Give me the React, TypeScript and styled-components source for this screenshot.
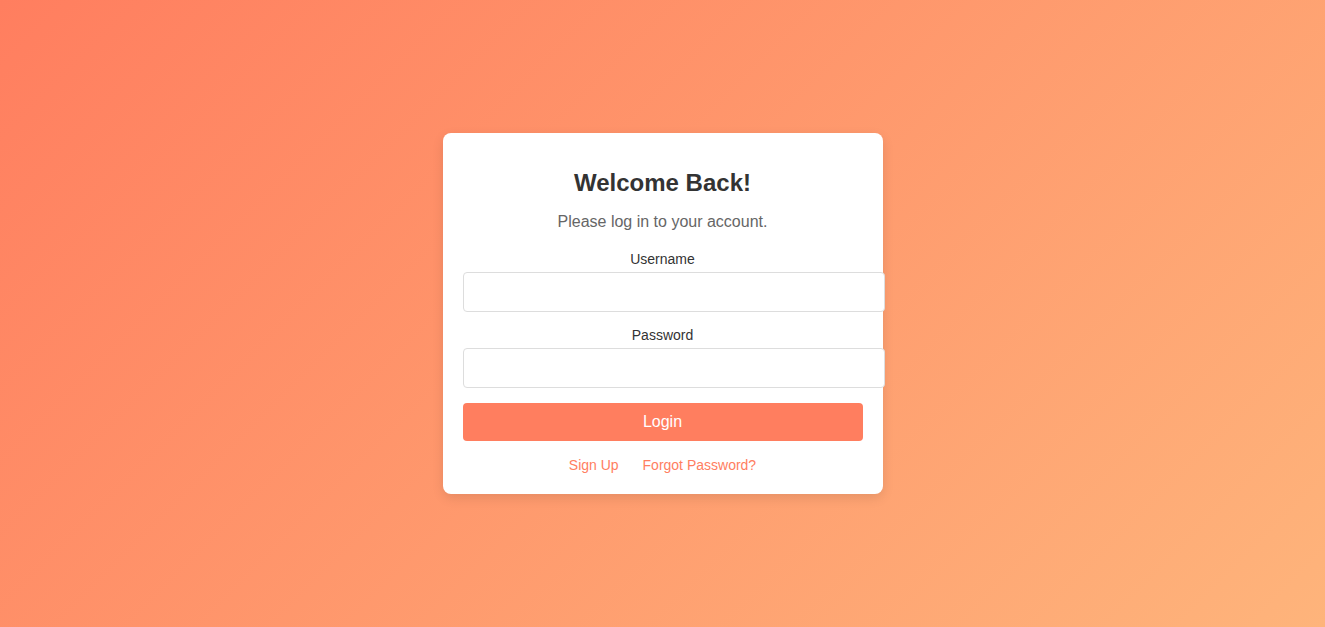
import styled, { createGlobalStyle } from "styled-components"

const GlobalStyle = createGlobalStyle`
  html, body {
    margin: 0;
    padding: 0;
  }

  body {
    font-family: "Liberation Sans", Arial, sans-serif;
  }
`

const Page = styled.main`
  min-height: 100vh;
  display: flex;
  align-items: center;
  justify-content: center;
  background: linear-gradient(135deg, #ff7e5f, #feb47b);
`

const Card = styled.div`
  width: 400px;
  padding: 20px 20px 21px;
  background: #fff;
  border-radius: 8px;
  box-shadow: 0 4px 12px rgba(0, 0, 0, 0.1);
  text-align: center;
`

const Title = styled.h2`
  margin: 16px 0;
  font-size: 24px;
  font-weight: bold;
  color: #333;
`

const Subtitle = styled.p`
  margin: 0 0 20px;
  font-size: 16px;
  color: #666;
`

const FormGroup = styled.div`
  margin-bottom: 15px;
`

const Label = styled.label`
  display: block;
  margin-bottom: 5px;
  font-size: 14px;
  color: #333;
`

const Input = styled.input`
  width: 100%;
  padding: 10px;
  font-size: 16px;
  font-family: inherit;
  border: 1px solid #ddd;
  border-radius: 4px;
  outline: none;
`

const Button = styled.button`
  display: block;
  width: 100%;
  padding: 10px;
  font-size: 16px;
  font-family: inherit;
  line-height: normal;
  color: #fff;
  background: #ff7e5f;
  border: none;
  border-radius: 4px;
  cursor: pointer;
`

const Links = styled.div`
  margin-top: 16px;
  font-size: 14px;

  a {
    margin: 0 10px;
    color: #ff7e5f;
    text-decoration: none;
  }
`

export default function App() {
  return (
    <>
      <GlobalStyle />
      <Page>
        <Card>
          <Title>Welcome Back!</Title>
          <Subtitle>Please log in to your account.</Subtitle>
          <form onSubmit={(e) => e.preventDefault()}>
            <FormGroup>
              <Label htmlFor="username">Username</Label>
              <Input id="username" type="text" />
            </FormGroup>
            <FormGroup>
              <Label htmlFor="password">Password</Label>
              <Input id="password" type="password" />
            </FormGroup>
            <Button type="submit">Login</Button>
          </form>
          <Links>
            <a href="#">Sign Up</a> <a href="#">Forgot Password?</a>
          </Links>
        </Card>
      </Page>
    </>
  )
}
